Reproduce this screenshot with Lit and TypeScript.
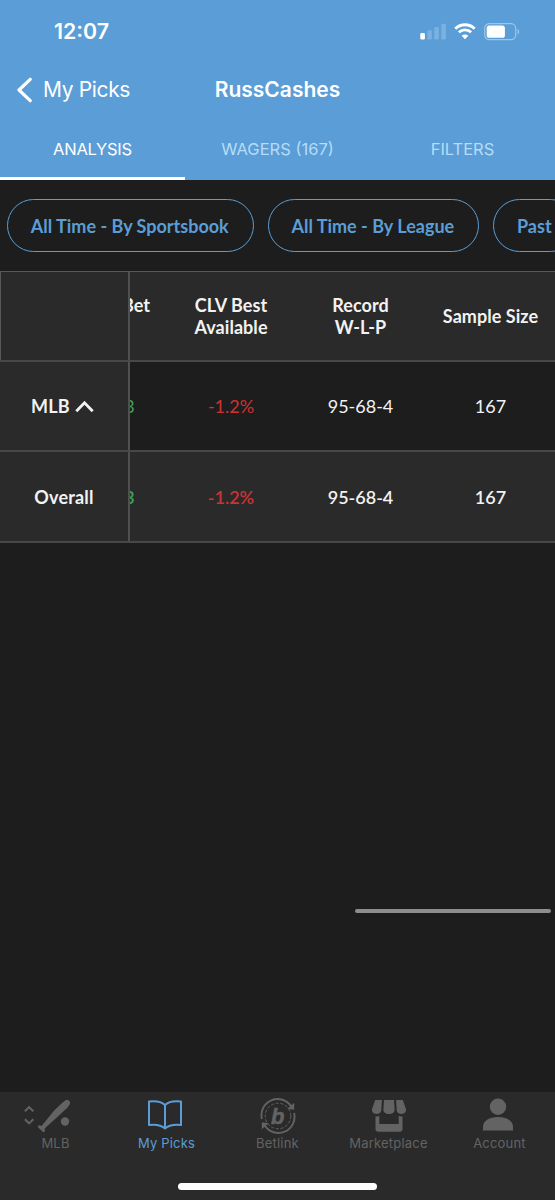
import { LitElement, html, css, svg } from "lit";
import { customElement } from "lit/decorators.js";

const signal = svg`<svg width="26" height="18" viewBox="0 0 26 18" fill="#fff">
  <rect x="0.3" y="10" width="4.6" height="6.5" rx="1.3"/>
  <g opacity=".2"><rect x="7.3" y="7.3" width="4.6" height="9.2" rx="1.2"/><rect x="14.3" y="4" width="4.6" height="12.5" rx="1.2"/><rect x="21.3" y="0.7" width="4.6" height="15.8" rx="1.2"/></g></svg>`;
const wifi = svg`<svg width="22" height="17" viewBox="0 0 22 17" fill="none" stroke="#fff" stroke-width="2.9">
  <path d="M1.3 5.7C6.7 .4 15.3 .4 20.7 5.7"/><path d="M4.9 9.3C8.3 6 13.7 6 17.1 9.3"/>
  <path d="M11 16.3L7.7 12.8C9.5 11.1 12.5 11.1 14.3 12.8Z" fill="#fff" stroke="none"/></svg>`;
const battery = svg`<svg width="36" height="18" viewBox="0 0 36 18">
  <rect x=".7" y=".7" width="31" height="16" rx="4.6" fill="none" stroke="#fff" stroke-opacity=".42" stroke-width="1.2"/>
  <rect x="2.7" y="2.6" width="18.2" height="12.2" rx="2.6" fill="#fff"/>
  <path d="M33.6 5.8C35.5 6.7 35.5 10.7 33.6 11.6Z" fill="#fff" opacity=".45"/></svg>`;

const batIcon = svg`<svg width="48" height="36" viewBox="0 0 48 36">
  <g fill="none" stroke="#636363" stroke-width="2.1"><path d="M1.9 11.2L6.1 7.1L10.3 11.2M1.9 19.3L6.1 23.4L10.3 19.3"/></g>
  <g fill="#636363"><path d="M42.6 .2Q44.4-.9 46 .7Q47.9 2.4 46.6 4.4L44.6 7.6L36.8 14.8L23.3 27.1L21.4 28.9Q22.6 30.6 21.4 31.8Q20.6 32.6 19.8 31.7L15.2 27.4Q14.4 26.5 15.4 25.7Q16.7 24.7 18.4 26L20 24.3L31.2 10.6L38.5 3.4Z"/><circle cx="42" cy="21.5" r="4.2"/></g></svg>`;
const bookIcon = svg`<svg width="36" height="32" viewBox="0 0 36 32" fill="none" stroke="#5b9dd6" stroke-width="2" stroke-linejoin="round">
  <path d="M18 6C14.5 2.8 8 1.8 2 2.6V26C8 25.2 14.2 26.1 18 29.5C21.8 26.1 28 25.2 34 26V2.6C28 1.8 21.5 2.8 18 6ZM18 6V29.5"/></svg>`;
const linkIcon = svg`<svg width="36" height="36" viewBox="0 0 36 36">
  <g fill="none" stroke="#636363"><path d="M1.9 21A16.2 16.2 0 0 1 31.3 8.5M34.1 15A16.2 16.2 0 0 1 4.7 27.5" stroke-width="1.9"/>
  <circle cx="18" cy="18" r="12.8" stroke-width="1" stroke-dasharray="3 1.8"/></g>
  <g fill="#636363"><path d="M34.2 4.8V11.8L27.2 10.8Z"/><path d="M1.8 31.2V24.2L8.8 25.2Z"/></g>
  <text class="mark" x="17.7" y="25.6" text-anchor="middle" fill="#636363" stroke="#636363" stroke-width=".5">b</text></svg>`;
const storeIcon = svg`<svg width="36" height="34" viewBox="0 0 36 34" fill="#636363">
  <path d="M4.2 1H10.9L10.3 11C10.3 13.5 8 15 5.6 15C2 15 .2 12.2 1.2 9.6Z"/>
  <path d="M13 1H23L23.6 10.7C23.6 13.2 21.5 15 18 15S12.4 13.2 12.4 10.7Z"/>
  <path d="M31.8 1H25.1L25.7 11C25.7 13.5 28 15 30.4 15C34 15 35.8 12.2 34.8 9.6Z"/>
  <path d="M4.5 17.2Q6.5 17.7 8.3 16.8V25H27.7V16.8Q29.5 17.7 31.5 17.2V30Q31.5 32.8 28.7 32.8H7.3Q4.5 32.8 4.5 30Z"/></svg>`;
const userIcon = svg`<svg width="32" height="34" viewBox="0 0 32 34" fill="#636363">
  <circle cx="16" cy="8.8" r="8.2"/><path d="M1 32.6V29C1 23 7 19.1 16 19.1S31 23 31 29V32.6Z"/></svg>`;

@customElement("app-root")
export class AppRoot extends LitElement {
  static styles = css`
    :host { display: flex; flex-direction: column; position: relative; width: 555px; height: 1200px; overflow: hidden;
      background: #1d1d1d; color: #f2f2f2; font-family: Lato, sans-serif; font-size: 18px; line-height: 21.6px; }
    * { box-sizing: border-box; }
    svg { display: block; flex: none; }
    header { height: 180px; background: #5b9dd6; color: #fff; font-family: Inter, sans-serif; flex: none; }
    .status { height: 63px; display: flex; align-items: center; padding: 0 35px 0 54px; }
    .time { font-size: 21.3px; font-weight: 600; flex: 1; padding-top: 1px; }
    .signals { display: flex; align-items: center; gap: 8px; }
    .nav { height: 54px; display: grid; grid-template-columns: 1fr auto 1fr; align-items: center; }
    .back { display: flex; align-items: center; gap: 10px; padding-left: 17px; font-size: 21px; letter-spacing: -.35px; }
    .title { font-size: 21px; font-weight: 600; }
    .tabs { height: 63px; display: grid; grid-template-columns: repeat(3, 1fr); font-size: 16.5px; text-align: center; }
    .tab { color: #b5dcf8; padding-top: 22px; border-bottom: 3px solid transparent; }
    .tab.on { color: #fff; border-color: #fff; letter-spacing: -.25px; }
    .pills { display: flex; gap: 14px; padding: 19px 0 0 7px; height: 91px; flex: none; overflow: hidden; }
    .pill { height: 53px; border: 1.5px solid #5b9dd6; border-radius: 27px; color: #5b9dd6; font-weight: 700;
      display: flex; align-items: center; padding: 2px 24px 0 22.8px; white-space: nowrap; flex: none; }
    .table { border-top: 1px solid #585858; flex: none; }
    .row { display: grid; grid-template-columns: 130px 36px 130px 129px 131px; border-bottom: 2px solid #484848; height: 90px; }
    .row.total { height: 91px; }
    .alt { background: #2a2a2a; }
    .cell { display: flex; align-items: center; justify-content: center; text-align: center; padding-top: 2px; }
    .total .cell { padding-top: 3px; }
    .first { background: #2a2a2a; border-right: 2px solid #505050; gap: 5px; font-weight: 700; letter-spacing: .2px; padding-right: 3px; }
    .total .first { padding-right: 0; }
    .corner { border-left: 1px solid #585858; }
    .cell.cut { overflow: hidden; justify-content: flex-end; }
    .cell.cut.h { padding: 2px 16px 21.6px 0; }
    .cell.cut.v { padding-right: 31.2px; }
    .bold { font-weight: 600; }
    .head { font-weight: 700; letter-spacing: .05px; }
    .red { color: #cc3333; }
    .green { color: #3da456; }
    .scroll { position: absolute; left: 355px; top: 909px; width: 196px; height: 4px; border-radius: 2px; background: #8e8e8e; }
    footer { margin-top: auto; height: 108px; background: #2a2a2a; display: flex; flex-direction: column; align-items: center; justify-content: space-between; padding-bottom: 10px; }
    .bar { width: 555px; display: grid; grid-template-columns: repeat(5, 111px); font-family: Inter, sans-serif; font-size: 13px; line-height: 16px; letter-spacing: .2px; color: #636363; }
    .item { display: flex; flex-direction: column; align-items: center; }
    .icon { height: 43px; padding: 6px 0 0 0; }
    .icon.wide { padding-top: 8px; margin-right: 18px; }
    .icon.book { padding: 7px 3px 0 0; }
    .icon.store { padding-top: 7px; }
    .icon.user { padding-right: 3px; }
    .active { color: #5b9dd6; }
    .home { width: 199px; height: 7px; border-radius: 4px; background: #fff; }
    .mark { font: italic 700 22px "Liberation Sans", sans-serif; }
  `;

  private row(name: unknown, bold: boolean) {
    const b = bold ? "bold" : "";
    return html`<div class="row ${bold ? "alt total" : ""}">
      <div class="cell first">${name}</div>
      <div class="cell cut v green ${b}">3</div>
      <div class="cell red ${b}">-1.2%</div>
      <div class="cell ${b}">95-68-4</div>
      <div class="cell ${b}">167</div>
    </div>`;
  }

  private item(icon: unknown, label: string, kind = "") {
    return html`<div class="item ${kind === "book" ? "active" : ""}"><div class="icon ${kind}">${icon}</div><span>${label}</span></div>`;
  }

  render() {
    return html`
      <header>
        <div class="status"><span class="time">12:07</span><div class="signals">${signal}${wifi}${battery}</div></div>
        <div class="nav">
          <div class="back"><svg width="16" height="26" viewBox="0 0 16 26" fill="none" stroke="#fff" stroke-width="3.2" stroke-linecap="round" stroke-linejoin="round"><path d="M13.2 2.3L2 13L13.2 23.7"/></svg>My Picks</div>
          <div class="title">RussCashes</div><div></div>
        </div>
        <div class="tabs"><div class="tab on">ANALYSIS</div><div class="tab">WAGERS (167)</div><div class="tab">FILTERS</div></div>
      </header>
      <div class="pills"><div class="pill">All Time - By Sportsbook</div><div class="pill">All Time - By League</div><div class="pill">Past</div></div>
      <div class="table">
        <div class="row alt head">
          <div class="cell first corner"></div>
          <div class="cell cut h">Bet</div>
          <div class="cell">CLV Best<br>Available</div>
          <div class="cell">Record<br>W-L-P</div>
          <div class="cell">Sample Size</div>
        </div>
        ${this.row(html`MLB<svg width="19" height="12" viewBox="0 0 19 12" fill="none" stroke="#f2f2f2" stroke-width="2.8"><path d="M1.3 10.2L9.5 1.8L17.7 10.2"/></svg>`, false)}
        ${this.row("Overall", true)}
      </div>
      <div class="scroll"></div>
      <footer>
        <div class="bar">
          ${this.item(batIcon, "MLB", "wide")}
          ${this.item(bookIcon, "My Picks", "book")}
          ${this.item(linkIcon, "Betlink")}
          ${this.item(storeIcon, "Marketplace", "store")}
          ${this.item(userIcon, "Account", "user")}
        </div>
        <div class="home"></div>
      </footer>`;
  }
}
